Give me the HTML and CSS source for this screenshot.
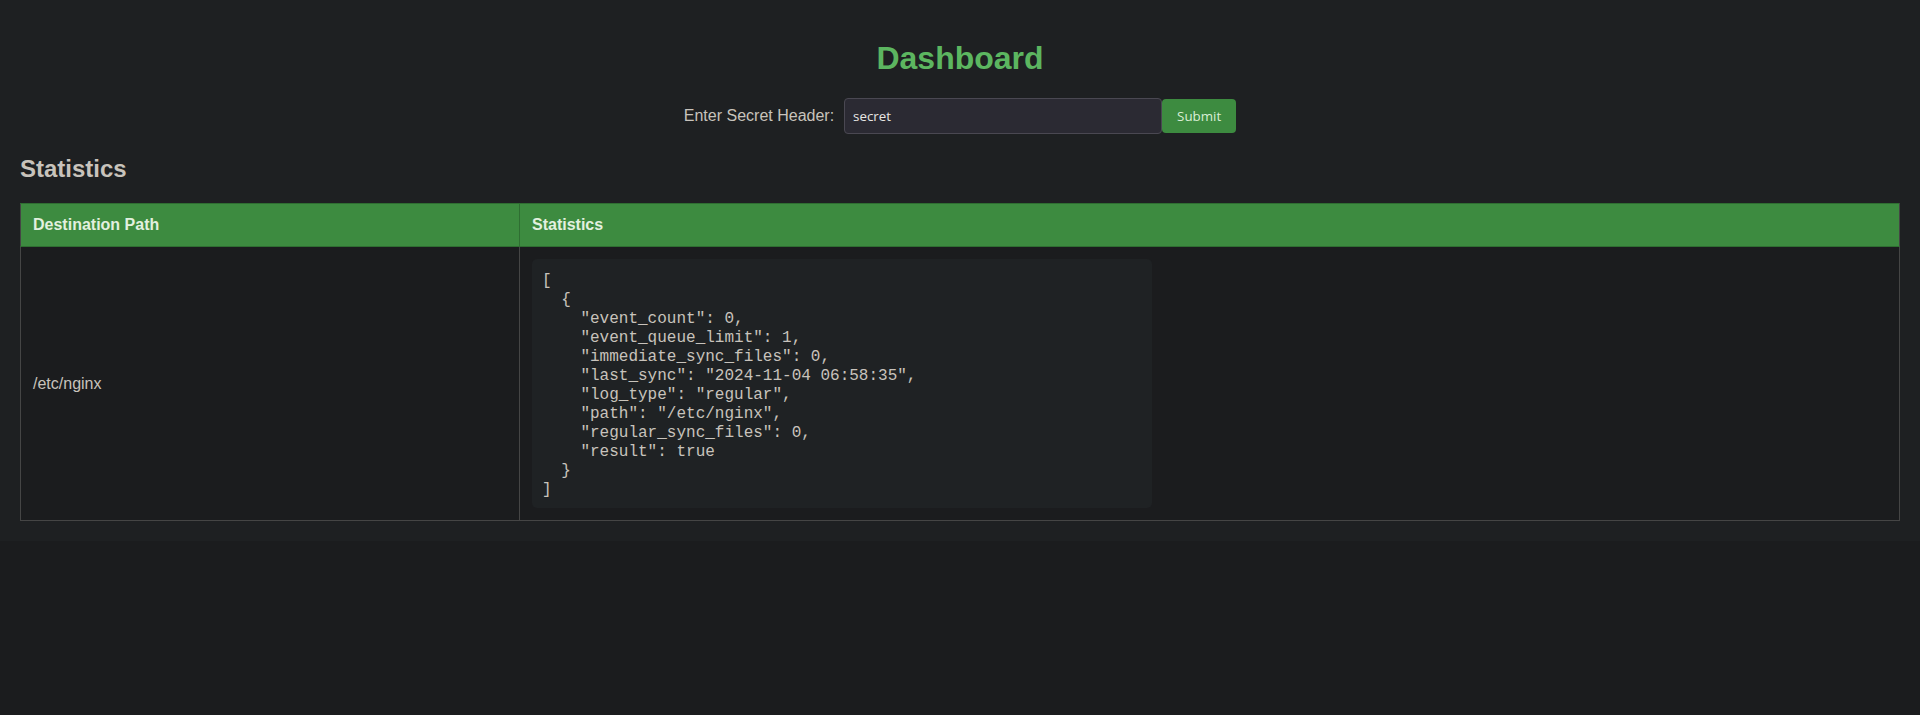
FILE: index.html
```html
<!DOCTYPE html>
<html lang="en">
<head>
<meta charset="utf-8">
<title>Dashboard</title>
<link rel="stylesheet" href="styles.css">
</head>
<body>
<h1 class="title">Dashboard</h1>
<form class="secret-form">
  <label class="secret-label" for="secret">Enter Secret Header:</label>
  <input class="secret-input" id="secret" type="text" value="secret">
  <button class="submit-btn" type="button">Submit</button>
</form>
<h2 class="section-title">Statistics</h2>
<table class="stats-table">
  <thead>
    <tr>
      <th class="col-path">Destination Path</th>
      <th class="col-stats">Statistics</th>
    </tr>
  </thead>
  <tbody>
    <tr>
      <td class="col-path">/etc/nginx</td>
      <td class="col-stats"><pre class="json">[
  {
    "event_count": 0,
    "event_queue_limit": 1,
    "immediate_sync_files": 0,
    "last_sync": "2024-11-04 06:58:35",
    "log_type": "regular",
    "path": "/etc/nginx",
    "regular_sync_files": 0,
    "result": true
  }
]</pre></td>
    </tr>
  </tbody>
</table>
</body>
</html>
```
FILE: styles.css
```css
html {
  background: #1b1c1e;
}
body {
  margin: 0;
  padding: 20px;
  background: #1e2022;
  font-family: "Liberation Sans", Arial, sans-serif;
  font-size: 16px;
  color: #c8c3bc;
}
.title {
  text-align: center;
  color: #5cb660;
  font-size: 32px;
  font-weight: bold;
  margin: 20px 0 21px;
}
.secret-form {
  display: flex;
  justify-content: center;
  align-items: center;
}
.secret-label {
  margin-right: 10px;
  color: #c8c3bc;
}
.secret-input {
  box-sizing: border-box;
  width: 318px;
  height: 36px;
  padding: 8px 8px;
  border: 1px solid #4a4852;
  border-radius: 4px;
  background: #2b2a33;
  color: #e8e6e3;
  font-family: "Open Sans", "Noto Sans", sans-serif;
  font-size: 13.33px;
  outline: none;
}
.submit-btn {
  box-sizing: border-box;
  height: 34px;
  padding: 0 15px;
  border: none;
  border-radius: 4px;
  background: #3d8b40;
  color: #d9eed6;
  font-family: "Open Sans", "Noto Sans", sans-serif;
  font-size: 13.33px;
}
.section-title {
  font-size: 24px;
  font-weight: bold;
  margin: 21px 0 20px;
  color: #c8c3bc;
}
.stats-table {
  width: 100%;
  border-collapse: collapse;
  background: #1b1c1e;
}
.stats-table th,
.stats-table td {
  border: 1px solid #454545;
  padding: 12px;
  text-align: left;
}
.stats-table th {
  background: #3d8b40;
  color: #e2f0df;
  font-weight: bold;
  border-color: #2f6e32;
}
.stats-table th.col-path {
  border-left-color: #454545;
}
.stats-table th.col-stats {
  border-right-color: #454545;
}
.stats-table th.col-path,
.stats-table td.col-path {
  width: 474px;
}
.json {
  box-sizing: border-box;
  width: 620px;
  margin: 0;
  padding: 13px 10px 8px;
  background: #1f2224;
  border-radius: 5px;
  font-family: "Liberation Mono", "Courier New", monospace;
  font-size: 16px;
  line-height: 19px;
  color: #c8c3bc;
}
```
